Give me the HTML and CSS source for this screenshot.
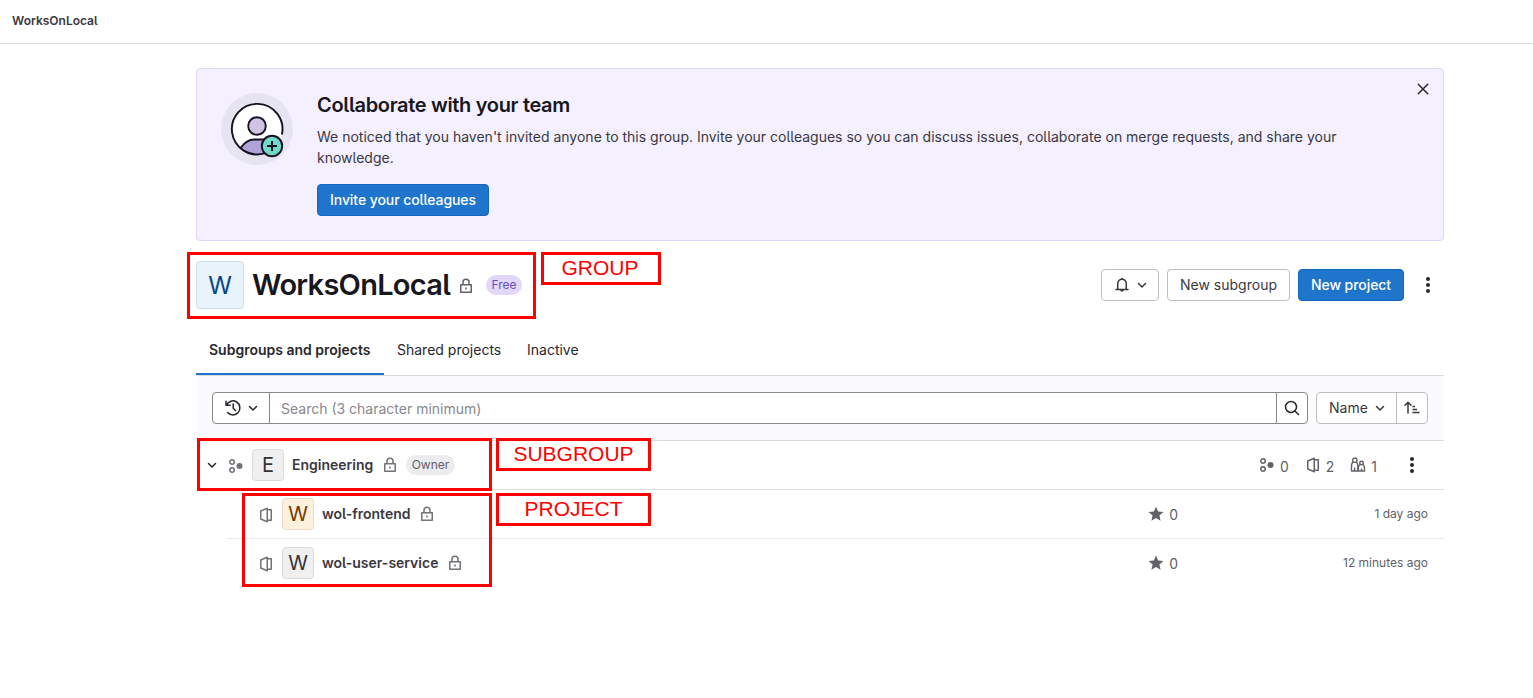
FILE: index.html
```html
<!DOCTYPE html>
<html lang="en">
<head>
<meta charset="utf-8">
<title>WorksOnLocal</title>
<link rel="stylesheet" href="styles.css">
</head>
<body>
<svg class="sprite" aria-hidden="true">
  <symbol id="lock" viewBox="0 0 16 16"><path d="M2.750 6.750h10.500v7.500H2.750zM5 6.500V4.250a3 3 0 0 1 6 0V6.500" fill="none" stroke="currentColor" stroke-width="1.500" stroke-linejoin="round"/><path d="M7.250 9.500h1.500v2h-1.500z" fill="currentColor"/></symbol>
  <symbol id="chevron" viewBox="0 0 16 16"><path d="M4.500 6.500 8 10l3.500-3.500" fill="none" stroke="currentColor" stroke-width="1.500" stroke-linecap="round" stroke-linejoin="round"/></symbol>
  <symbol id="kebab" viewBox="0 0 16 16"><g fill="currentColor"><circle cx="8" cy="2" r="2"/><circle cx="8" cy="8" r="2"/><circle cx="8" cy="14" r="2"/></g></symbol>
  <symbol id="subgroup" viewBox="0 0 16 16"><g fill="none" stroke="currentColor" stroke-width="1.500"><circle cx="4" cy="4" r="2.250"/><circle cx="4" cy="12" r="2.250"/></g><circle cx="11.500" cy="8" r="3" fill="currentColor"/></symbol>
  <symbol id="project" viewBox="0 0 16 16"><path d="M2.750 4 9.250 1.200v13.600L2.750 12zM9.250 2.750h4v10.500h-4" fill="none" stroke="currentColor" stroke-width="1.500" stroke-linejoin="round"/></symbol>
  <symbol id="star" viewBox="0 0 16 16"><path d="M8 .6l2.100 4.900 5.300.5-4 3.500 1.200 5.200L8 12l-4.600 2.700 1.200-5.200L.6 6l5.300-.5z" fill="currentColor"/></symbol>
</svg>

<header class="topbar">WorksOnLocal</header>

<main class="page">
  <section class="banner">
    <svg class="banner-art" viewBox="0 0 72 72">
      <circle cx="36" cy="36" r="36" fill="#e7e4f2"/>
      <circle cx="36" cy="36" r="25.500" fill="#fff"/>
      <path d="M19.500 54.500C23 49.500 27 46.500 33 46.500h12V60.500Q31 64 19.500 54.500z" fill="#afa3d8"/>
      <path d="M60.900 41.500A25.300 25.300 0 1 0 44 60.200" fill="none" stroke="#171321" stroke-width="1.900"/>
      <path d="M19.800 54.700C23.500 49.500 27 46.500 33 46.500h10" fill="none" stroke="#171321" stroke-width="1.900"/>
      <circle cx="36" cy="33" r="8.800" fill="#cfc4e4" stroke="#171321" stroke-width="1.900"/>
      <circle cx="51" cy="53" r="10.200" fill="#6fdac9" stroke="#171321" stroke-width="1.900"/>
      <path d="M51 48v10M46 53h10" stroke="#171321" stroke-width="2"/>
    </svg>
    <div class="banner-body">
      <h2 class="banner-title">Collaborate with your team</h2>
      <p class="banner-text">We noticed that you haven't invited anyone to this group. Invite your colleagues so you can discuss issues, collaborate on merge requests, and share your knowledge.</p>
      <button class="btn primary invite">Invite your colleagues</button>
    </div>
    <svg class="close" viewBox="0 0 16 16"><path d="m3.300 3.300 9.400 9.400M12.700 3.300l-9.400 9.400" stroke="currentColor" stroke-width="1.500" stroke-linecap="round"/></svg>
  </section>

  <section class="heading">
    <span class="avatar large blue">W</span>
    <h1 class="title">WorksOnLocal</h1>
    <svg class="icon heading-lock"><use href="#lock"/></svg>
    <span class="badge free">Free</span>
    <div class="actions">
      <button class="btn notify">
        <svg class="icon" viewBox="0 0 16 16"><path d="M2 12.400h12M3.750 12V6.500a4.250 4.250 0 0 1 8.500 0V12" fill="none" stroke="currentColor" stroke-width="1.500" stroke-linecap="round"/><path d="M7.200 1h1.600v1.500H7.200zM6.200 13h3.600a1.800 1.700 0 0 1-3.600 0z" fill="currentColor"/></svg>
        <svg class="icon"><use href="#chevron"/></svg>
      </button>
      <button class="btn new-subgroup">New subgroup</button>
      <button class="btn primary new-project">New project</button>
      <svg class="icon header-menu"><use href="#kebab"/></svg>
    </div>
  </section>

  <nav class="tabs">
    <a class="tab active">Subgroups and projects</a>
    <a class="tab shared">Shared projects</a>
    <a class="tab inactive">Inactive</a>
  </nav>

  <div class="filters">
    <div class="search">
      <span class="history">
        <svg class="icon" viewBox="0 0 16 16"><path d="M1 1.200v4h4.100M1.500 5A7 7 0 1 1 2.600 12.500M8.200 4v4.200l2.300 2.300" fill="none" stroke="currentColor" stroke-width="1.500" stroke-linecap="round" stroke-linejoin="round"/></svg>
        <svg class="icon"><use href="#chevron"/></svg>
      </span>
      <span class="placeholder">Search (3 character minimum)</span>
      <span class="search-button"><svg class="icon" viewBox="0 0 16 16"><circle cx="7" cy="7" r="5.500" fill="none" stroke="currentColor" stroke-width="1.500"/><path d="m11 11 3.500 3.500" stroke="currentColor" stroke-width="1.500" stroke-linecap="round"/></svg></span>
    </div>
    <div class="sort">
      <span class="sort-name"><span>Name</span><svg class="icon"><use href="#chevron"/></svg></span>
      <span class="sort-order"><svg class="icon" viewBox="0 0 16 16"><path d="M4 13V2.500M1 5.200l3-3 3 3" fill="none" stroke="currentColor" stroke-width="1.500" stroke-linecap="round" stroke-linejoin="round"/><path d="M8.500 6.500h2.500M8.500 9.500h4.500M8.500 12.500H15.500" stroke="currentColor" stroke-width="1.500"/></svg></span>
    </div>
  </div>

  <div class="row group-row">
    <svg class="icon toggle"><use href="#chevron"/></svg>
    <svg class="icon kind"><use href="#subgroup"/></svg>
    <span class="avatar gray">E</span>
    <span class="name engineering">Engineering</span>
    <svg class="icon muted"><use href="#lock"/></svg>
    <span class="badge owner">Owner</span>
    <div class="stats">
      <span class="stat"><svg class="icon"><use href="#subgroup"/></svg>0</span>
      <span class="stat"><svg class="icon"><use href="#project"/></svg>2</span>
      <span class="stat"><svg class="icon" viewBox="0 0 16 16"><g fill="none" stroke="currentColor" stroke-width="1.400" stroke-linejoin="round"><circle cx="4.800" cy="3.200" r="2.200"/><circle cx="11.500" cy="6" r="1.800"/><path d="M3 5C1.800 6 1.500 7.500 1.500 9v5h6.300V9c0-1.500-.3-3-1.500-4M10 7.500c-1.200.8-1.600 2-1.600 3.200V14h6.100v-3.300c0-1.200-.4-2.400-1.600-3.200M4.650 13.500v-3M11.500 13.500v-2"/></g></svg>1</span>
      <svg class="icon row-menu"><use href="#kebab"/></svg>
    </div>
  </div>
  <div class="row project-row">
    <svg class="icon kind"><use href="#project"/></svg>
    <span class="avatar orange">W</span>
    <span class="name frontend">wol-frontend</span>
    <svg class="icon muted"><use href="#lock"/></svg>
    <div class="meta"><span class="stat"><svg class="icon"><use href="#star"/></svg>0</span><time class="day">1 day ago</time></div>
  </div>
  <div class="row project-row last">
    <svg class="icon kind"><use href="#project"/></svg>
    <span class="avatar gray">W</span>
    <span class="name service">wol-user-service</span>
    <svg class="icon muted"><use href="#lock"/></svg>
    <div class="meta"><span class="stat"><svg class="icon"><use href="#star"/></svg>0</span><time class="minutes">12 minutes ago</time></div>
  </div>
</main>

<div class="mark mark-group"></div>
<div class="mark label label-group">GROUP</div>
<div class="mark mark-subgroup"></div>
<div class="mark label label-subgroup">SUBGROUP</div>
<div class="mark mark-project"></div>
<div class="mark label label-project">PROJECT</div>
</body>
</html>
```
FILE: styles.css
```css
* { box-sizing: border-box; }
body {
  margin: 0;
  height: 698px;
  overflow: hidden;
  position: relative;
  background: #fff;
  color: #28272d;
  font: 14px/20px Inter, "Noto Sans", sans-serif;
  font-feature-settings: "cv05";
}
h1, h2, p { margin: 0; }
.sprite { position: absolute; width: 0; height: 0; }
.icon { width: 16px; height: 16px; flex: none; display: block; overflow: visible; }

.topbar {
  height: 44px;
  padding: 11px 12px 0;
  border-bottom: 1px solid #dcdcde;
  font-size: 12px;
  font-weight: 600;
  color: #3a383f;
}
.page { width: 1248px; margin: 24px 0 0 196px; }

.banner {
  display: flex;
  height: 173px;
  padding: 24px 12px 24px 24px;
  border: 1px solid #e1d8f9;
  border-radius: 4px;
  background: #f4f0ff;
}
.banner-art { width: 72px; height: 72px; flex: none; margin-right: 24px; }
.banner-body { flex: 1; }
.banner-title { font-size: 20px; line-height: 24px; font-weight: 600; letter-spacing: -0.33px; color: #18171d; }
.banner-text { width: 1045px; margin-top: 9px; line-height: 21px; color: #3a383f; }
.close { width: 16px; height: 16px; margin: -12px 0 0; color: #28272d; }

.btn {
  display: flex;
  align-items: center;
  justify-content: center;
  height: 32px;
  padding: 0;
  border: 1px solid #bfbfc3;
  border-radius: 4px;
  background: #fff;
  color: #3a383f;
  font: inherit;
  font-feature-settings: inherit;
  white-space: nowrap;
}
.btn.primary { border-color: #1068bf; background: #1f75cb; color: #fff; font-weight: 500; letter-spacing: -0.07px; }
.invite { width: 172px; margin-top: 16px; }
.btn.notify { width: 58px; gap: 4px; padding-left: 4px; }
.new-subgroup { width: 123px; }
.new-project { width: 106px; }

.heading { display: flex; align-items: center; height: 48px; margin-top: 20px; }
.avatar {
  display: flex;
  align-items: center;
  justify-content: center;
  width: 32px;
  height: 32px;
  flex: none;
  border: 1px solid #dcdcde;
  border-radius: 4px;
  font-size: 20px;
}
.avatar.large { width: 48px; height: 48px; padding-top: 2px; font-size: 24px; }
.blue { background: #e9f3fc; border-color: #d2dfeb; color: #064787; }
.gray { background: #f0f0f0; border-color: #dcdcde; color: #333238; }
.orange { background: #fdf1dd; border-color: #e8dbc8; color: #703800; }
.title { width: 198px; margin-left: 8px; font-size: 29px; line-height: 36px; font-weight: 600; letter-spacing: -0.72px; color: #18171d; white-space: nowrap; }
.heading-lock { margin: 2px 0 0 8px; color: #626168; }
.badge { display: flex; align-items: center; justify-content: center; height: 20px; border-radius: 10px; font-size: 12px; }
.free { width: 36px; margin-left: 12px; background: #e1d8f9; color: #694cc0; }
.owner { width: 49px; margin-left: 8px; background: #ececef; color: #626168; }
.actions { display: flex; align-items: center; gap: 8px; margin-left: auto; }
.header-menu { margin: 0 8px; }

.tabs { display: flex; height: 50px; margin-top: 17px; border-bottom: 1px solid #dcdcde; }
.tab { padding: 14px 13px 0; height: 50px; white-space: nowrap; }
.tab.active { width: 188px; border-bottom: 2px solid #1f75cb; height: 49px; font-weight: 600; }
.shared { width: 130px; }

.filters { display: flex; gap: 8px; height: 65px; padding: 16px 16px 0; background: #fbfafd; border-bottom: 1px solid #dcdcde; }
.search { display: flex; width: 1096px; height: 32px; border: 1px solid #89888d; border-radius: 4px; background: #fff; }
.history { display: flex; align-items: center; gap: 4px; width: 57px; padding-left: 12px; border-right: 1px solid #89888d; }
.placeholder { flex: 1; padding: 6px 11px; color: #89888d; }
.search-button { display: flex; align-items: center; justify-content: center; width: 31px; border-left: 1px solid #89888d; }
.sort { display: flex; width: 112px; height: 32px; border: 1px solid #bfbfc3; border-radius: 4px; background: #fff; color: #3a383f; }
.sort-name { display: flex; align-items: center; justify-content: space-between; width: 80px; padding: 0 8px 0 12px; border-right: 1px solid #bfbfc3; }
.sort-order { display: flex; flex: 1; align-items: center; justify-content: center; }

.row { display: flex; align-items: center; height: 49px; border-bottom: 1px solid #dcdcde; }
.group-row { padding: 0 16px 0 8px; }
.project-row { margin-left: 30px; padding: 0 16px 0 32px; border-color: #ececef; }
.project-row.last { border-color: transparent; }
.toggle { color: #28272d; }
.kind { margin: 2px 8px 0; color: #737278; }
.project-row .kind { margin-left: 0; }
.name { margin-left: 8px; margin-right: 8px; font-weight: 600; color: #3a383f; white-space: nowrap; }
.engineering { width: 82px; }
.frontend { width: 89px; }
.service { width: 117px; }
.muted { color: #737278; }
.stats, .meta { display: flex; align-items: center; margin-left: auto; color: #626168; }
.stats { gap: 16px; }
.stat { display: flex; align-items: center; gap: 5px; padding-top: 2px; }
.stats .stat { padding-top: 3px; }
.stat .icon { margin-top: -3px; }
.row-menu { margin-left: 11px; margin-right: 8px; color: #28272d; }
time { width: 250px; text-align: right; font-size: 12px; }

.mark { position: absolute; border: 3px solid #f00; }
.mark-group { left: 187px; top: 252px; width: 349px; height: 67px; }
.mark-subgroup { left: 197px; top: 438px; width: 295px; height: 53px; }
.mark-project { left: 242px; top: 493px; width: 250px; height: 94px; }
.label { height: 33px; color: #f00; background: #fff; font: 21px/26px "Liberation Sans", Arial, sans-serif; text-align: center; }
.label-group { left: 541px; top: 252px; width: 120px; padding-right: 2px; }
.label-subgroup { left: 496px; top: 438px; width: 155px; }
.label-project { left: 496px; top: 493px; width: 155px; }
```
